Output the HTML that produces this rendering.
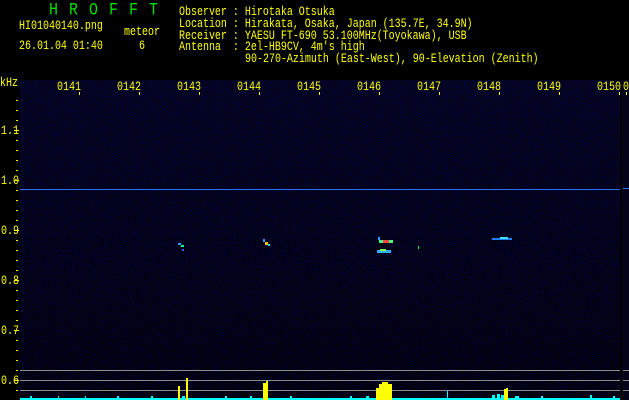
<!DOCTYPE html>
<html><head><meta charset="utf-8"><style>
html,body{margin:0;padding:0;background:#000;width:629px;height:400px;overflow:hidden}
svg{display:block}
text{font-family:"Liberation Mono",monospace;font-size:10px;fill:#ffff00}
text.h{font-size:15px;fill:#00e000}
</style></head><body>
<svg width="629" height="400" viewBox="0 0 629 400" xmlns="http://www.w3.org/2000/svg">
<defs>
<filter id="n" x="0" y="0" width="100%" height="100%">
<feTurbulence type="fractalNoise" baseFrequency="0.9" numOctaves="1" seed="3" result="t"/>
<feColorMatrix in="t" type="matrix" values="0 0 0 0 0  0 0 0 0 0  0 0 0 0 0.8  0 0 0 10 -6.2"/>
</filter>
<linearGradient id="g" x1="0" y1="0" x2="0" y2="1">
<stop offset="0" stop-color="#04041f"/><stop offset="0.35" stop-color="#03031a"/><stop offset="1" stop-color="#01010e"/>
</linearGradient>
</defs>
<rect width="629" height="400" fill="#000"/>
<rect x="20" y="80" width="600" height="320" fill="url(#g)"/>
<rect x="20" y="80" width="600" height="320" filter="url(#n)" opacity="0.45"/>
<rect x="622" y="80" width="7" height="320" fill="#03031a"/>
<g transform="scale(1,1.2)">
<text class="h" x="49" y="12">H</text><text class="h" x="69" y="12">R</text><text class="h" x="89" y="12">O</text><text class="h" x="109" y="12">F</text><text class="h" x="129" y="12">F</text><text class="h" x="149" y="12">T</text>
</g>
<g transform="scale(1,1.3)">
<text x="19" y="22.3">HI01040140.png</text>
<text x="19" y="37.7">26.01.04 01:40</text>
<text x="124" y="26.9">meteor</text>
<text x="139" y="37.7">6</text>
<text x="179" y="11.5" xml:space="preserve">Observer : Hirotaka Otsuka</text>
<text x="179" y="20.8" xml:space="preserve">Location : Hirakata, Osaka, Japan (135.7E, 34.9N)</text>
<text x="179" y="30" xml:space="preserve">Receiver : YAESU FT-690 53.100MHz(Toyokawa), USB</text>
<text x="179" y="38.5" xml:space="preserve">Antenna  : 2el-HB9CV, 4m's high</text>
<text x="245" y="47.7">90-270-Azimuth (East-West), 90-Elevation (Zenith)</text>
<text x="0" y="66.2">kHz</text>
<text x="57" y="69.2">0141</text><text x="117" y="69.2">0142</text><text x="177" y="69.2">0143</text><text x="237" y="69.2">0144</text><text x="297" y="69.2">0145</text>
<text x="357" y="69.2">0146</text><text x="417" y="69.2">0147</text><text x="477" y="69.2">0148</text><text x="537" y="69.2">0149</text><text x="597" y="69.2">0150</text><text x="623" y="69.2">0</text>
<text x="1" y="103.1">1.1</text><text x="1" y="141.5">1.0</text><text x="1" y="180">0.9</text><text x="1" y="218.5">0.8</text><text x="1" y="256.9">0.7</text><text x="1" y="295.4">0.6</text>
</g>
<g fill="#ffff00">
<rect x="79" y="92" width="1" height="3"/><rect x="139" y="92" width="1" height="3"/><rect x="199" y="92" width="1" height="3"/><rect x="259" y="92" width="1" height="3"/><rect x="319" y="92" width="1" height="3"/><rect x="379" y="92" width="1" height="3"/><rect x="439" y="92" width="1" height="3"/><rect x="499" y="92" width="1" height="3"/><rect x="559" y="92" width="1" height="3"/><rect x="619" y="92" width="1" height="3"/><rect x="626" y="92" width="1" height="3"/>
</g>
<g fill="#ffff00">
<rect x="16" y="100" width="2" height="1"/><rect x="16" y="110" width="2" height="1"/><rect x="16" y="120" width="2" height="1"/><rect x="14" y="130" width="5" height="1"/><rect x="16" y="140" width="2" height="1"/><rect x="16" y="150" width="2" height="1"/><rect x="16" y="160" width="2" height="1"/><rect x="16" y="170" width="2" height="1"/><rect x="14" y="180" width="5" height="1"/><rect x="16" y="190" width="2" height="1"/>
<rect x="16" y="200" width="2" height="1"/><rect x="16" y="210" width="2" height="1"/><rect x="16" y="220" width="2" height="1"/><rect x="14" y="230" width="5" height="1"/><rect x="16" y="240" width="2" height="1"/><rect x="16" y="250" width="2" height="1"/><rect x="16" y="260" width="2" height="1"/><rect x="16" y="270" width="2" height="1"/><rect x="14" y="280" width="5" height="1"/><rect x="16" y="290" width="2" height="1"/>
<rect x="16" y="300" width="2" height="1"/><rect x="16" y="310" width="2" height="1"/><rect x="16" y="320" width="2" height="1"/><rect x="14" y="330" width="5" height="1"/><rect x="16" y="340" width="2" height="1"/><rect x="16" y="350" width="2" height="1"/><rect x="16" y="360" width="2" height="1"/><rect x="16" y="370" width="2" height="1"/><rect x="14" y="380" width="5" height="1"/><rect x="16" y="390" width="2" height="1"/>
</g>
<rect x="20" y="189" width="600" height="1" fill="#2f6fff"/>
<rect x="623" y="188" width="6" height="1" fill="#2f6fff"/>
<g fill="#8c8c8c"><rect x="20" y="370" width="600" height="1"/><rect x="20" y="380" width="600" height="1"/><rect x="20" y="390" width="600" height="1"/>
<rect x="623" y="370" width="6" height="1"/><rect x="623" y="380" width="6" height="1"/><rect x="623" y="390" width="6" height="1"/></g>
<g>
<rect x="178" y="243" width="3" height="2" fill="#30a0ff"/><rect x="181" y="245" width="3" height="2" fill="#00ffa0"/><rect x="182" y="249" width="2" height="2" fill="#2060ff"/>
<rect x="263" y="239" width="2" height="3" fill="#3090ff"/><rect x="265" y="242" width="3" height="3" fill="#ffc000"/><rect x="268" y="244" width="2" height="2" fill="#20e0ff"/>
<rect x="378" y="237" width="2" height="3" fill="#20a0ff"/><rect x="379" y="240" width="14" height="3" fill="#40ff80"/><rect x="383" y="240" width="6" height="3" fill="#ff4040"/>
<rect x="377" y="250" width="14" height="3" fill="#30b0ff"/><rect x="380" y="249" width="6" height="2" fill="#80ff40"/>
<rect x="418" y="246" width="1" height="3" fill="#00ff60"/>
<rect x="492" y="238" width="20" height="2" fill="#2080ff"/><rect x="500" y="237" width="8" height="2" fill="#40e0ff"/>
</g>
<g fill="#00ffff">
<rect x="20" y="398" width="600" height="2"/>
<rect x="30" y="396" width="2" height="4"/><rect x="58" y="396" width="1" height="4"/><rect x="85" y="396" width="1" height="4"/><rect x="117" y="396" width="2" height="4"/><rect x="151" y="396" width="2" height="4"/><rect x="182" y="396" width="3" height="4"/><rect x="225" y="396" width="2" height="4"/><rect x="250" y="396" width="2" height="4"/><rect x="290" y="396" width="2" height="4"/><rect x="350" y="396" width="2" height="4"/><rect x="366" y="396" width="3" height="4"/><rect x="447" y="391" width="1" height="9"/><rect x="492" y="395" width="3" height="5"/><rect x="497" y="394" width="3" height="6"/><rect x="501" y="395" width="3" height="5"/><rect x="515" y="396" width="4" height="4"/><rect x="541" y="396" width="2" height="4"/><rect x="590" y="395" width="2" height="5"/><rect x="613" y="396" width="2" height="4"/>
</g>
<g fill="#ffff00">
<rect x="178" y="386" width="2" height="14"/><rect x="186" y="378" width="2" height="22"/>
<rect x="263" y="383" width="3" height="17"/><rect x="266" y="381" width="2" height="19"/>
<rect x="376" y="388" width="3" height="12"/><rect x="379" y="384" width="4" height="16"/><rect x="382" y="382" width="6" height="18"/><rect x="388" y="384" width="4" height="16"/>
<rect x="504" y="389" width="2" height="11"/><rect x="506" y="388" width="2" height="12"/>
</g>
</svg>
</body></html>
